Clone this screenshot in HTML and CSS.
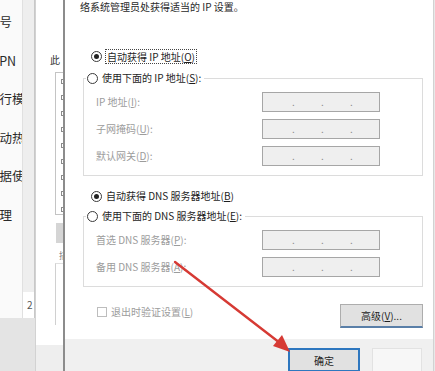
FILE: index.html
```html
<!DOCTYPE html>
<html lang="zh-CN">
<head>
<meta charset="utf-8">
<title>IPv4 属性</title>
<link rel="stylesheet" href="styles.css">
</head>
<body>
<div class="screen">
  <div class="win-a">
    <div class="win-a-top">
      <div class="nav">
        <div class="nav-item">拨号</div>
        <div class="nav-item vpn">VPN</div>
        <div class="nav-item">飞行模式</div>
        <div class="nav-item">移动热点</div>
        <div class="nav-item">数据使用量</div>
        <div class="nav-item">代理</div>
      </div>
      <div class="strip">
        <div class="page-num">2</div>
      </div>
    </div>
    <div class="win-a-bottom"></div>
  </div>

  <div class="win-b">
    <div class="b-title">此</div>
    <div class="b-list">
      <span class="b-chk"></span><span class="b-chk"></span><span class="b-chk"></span>
      <span class="b-chk"></span><span class="b-chk"></span><span class="b-chk"></span>
      <span class="b-chk"></span><span class="b-chk"></span><span class="b-chk"></span>
    </div>
    <div class="b-block"></div>
    <div class="b-label">描</div>
    <div class="b-box"></div>
    <div class="b-foot"></div>
  </div>

  <div class="dialog">
    <div class="dlg-body">
      <div class="intro">络系统管理员处获得适当的 IP 设置。</div>

      <div class="radio-row first">
        <span class="radio checked"></span>
        <span class="focus">自动获得 IP 地址(<u>O</u>)</span>
      </div>

      <div class="group ip-group">
        <div class="legend">
          <span class="radio"></span>
          <span>使用下面的 IP 地址(<u>S</u>):</span>
        </div>
        <div class="fields">
          <label class="f-label">IP 地址(<u>I</u>):</label>
          <div class="ip"><span>.</span><span>.</span><span>.</span></div>
          <label class="f-label">子网掩码(<u>U</u>):</label>
          <div class="ip"><span>.</span><span>.</span><span>.</span></div>
          <label class="f-label">默认网关(<u>D</u>):</label>
          <div class="ip"><span>.</span><span>.</span><span>.</span></div>
        </div>
      </div>

      <div class="radio-row dns">
        <span class="radio checked"></span>
        <span>自动获得 DNS 服务器地址(<u>B</u>)</span>
      </div>

      <div class="group dns-group">
        <div class="legend">
          <span class="radio"></span>
          <span>使用下面的 DNS 服务器地址(<u>E</u>):</span>
        </div>
        <div class="fields">
          <label class="f-label">首选 DNS 服务器(<u>P</u>):</label>
          <div class="ip"><span>.</span><span>.</span><span>.</span></div>
          <label class="f-label">备用 DNS 服务器(<u>A</u>):</label>
          <div class="ip"><span>.</span><span>.</span><span>.</span></div>
        </div>
      </div>

      <div class="bottom-row">
        <div class="check-row">
          <span class="checkbox"></span>
          <span>退出时验证设置(<u>L</u>)</span>
        </div>
        <button class="btn adv">高级(<u>V</u>)...</button>
      </div>
    </div>
    <div class="dlg-foot">
      <button class="btn ok">确定</button>
      <span class="btn ghost"></span>
    </div>
  </div>

  <svg class="arrow" width="435" height="371" viewBox="0 0 435 371">
    <line x1="175" y1="262" x2="280" y2="343" stroke="#d63a34" stroke-width="2.4" stroke-linecap="round"/>
    <polygon points="290,352 273,346 282,335" fill="#d63a34"/>
  </svg>
</div>
</body>
</html>
```

FILE: styles.css
```css
* { box-sizing: border-box; margin: 0; padding: 0; }
html, body { width: 435px; height: 371px; overflow: hidden; }
body {
  background: #e8e8e8;
  font-family: "Noto Sans CJK SC", "Microsoft YaHei", sans-serif;
  font-size: 10px;
  line-height: 14px;
  color: #1e1e1e;
}
.screen { display: flex; height: 371px; position: relative; }

/* left window */
.win-a { width: 35px; flex: none; display: flex; flex-direction: column; }
.win-a-top { height: 318px; display: flex; }
.nav { width: 22px; background: #fafafa; overflow: hidden; padding-top: 14px; }
.nav-item {
  white-space: nowrap;
  font-size: 12.5px;
  line-height: 16px;
  height: 38.6px;
  margin-left: -13px;
  color: #2a2a2a;
}
.nav-item.vpn { margin-left: -8px; }
.strip {
  width: 13px;
  background: #eeeeee;
  border-left: 1px solid #e0e0e0;
  border-right: 1px solid #c8c8c8;
  display: flex;
  flex-direction: column;
  justify-content: flex-end;
}
.page-num {
  height: 26px;
  background: #ffffff;
  color: #555;
  font-size: 10px;
  line-height: 26px;
  padding-left: 4px;
}
.win-a-bottom { flex: 1; background: #e4e4e4; }

/* middle window */
.win-b {
  width: 28px;
  flex: none;
  background: #ffffff;
  border-left: 1px solid #d2d2d2;
  display: flex;
  flex-direction: column;
  overflow: hidden;
}
.b-title { margin: 52px 0 0 14px; line-height: 16px; font-size: 10px; color: #333; }
.b-list {
  margin: 4px 0 0 19px;
  height: 143px;
  border: 1px solid #c4c4c4;
  border-right: none;
  display: flex;
  flex-direction: column;
  gap: 11px;
  padding: 6px 0 0 5px;
}
.b-chk { width: 5px; height: 5px; border: 1px solid #8a8a8a; flex: none; }
.b-block { margin: 8px 0 0 20px; height: 20px; background: #d5d5d5; }
.b-label { margin: 6px 0 0 23px; font-size: 9px; line-height: 14px; color: #888; }
.b-box { margin-left: 19px; height: 62px; border-left: 1px solid #d0d0d0; border-top: 1px solid #e0e0e0; }
.b-foot { margin-top: 20px; flex: 1; background: #eeeeee; }

/* dialog */
.dialog {
  flex: 1;
  margin-right: 1px;
  border-left: 2px solid #8c8c8c;
  border-right: 1px solid #d2d2d2;
  display: flex;
  flex-direction: column;
  background: #f0f0f0;
}
.dlg-body {
  height: 339px;
  flex: none;
  background: #ffffff;
  padding: 0 10px 0 18px;
  display: flex;
  flex-direction: column;
}
.intro {
  margin: -1px 0 0 -3px;
  height: 16px;
  line-height: 16px;
  white-space: nowrap;
  color: #2a2a2a;
}
.radio-row {
  display: flex;
  align-items: center;
  gap: 3px;
  height: 16px;
  white-space: nowrap;
  flex: none;
}
.radio-row.first { margin: 33px 0 0 8px; }
.radio-row.dns { margin: 12px 0 0 8px; gap: 4px; }
.radio {
  width: 11px;
  height: 11px;
  border: 1px solid #3a3a3a;
  border-radius: 50%;
  background: #fff;
  flex: none;
  display: flex;
  align-items: center;
  justify-content: center;
}
.radio.checked::after {
  content: "";
  width: 5px;
  height: 5px;
  border-radius: 50%;
  background: #222;
}
.focus { border: 1px dotted #444; padding: 0 1px; line-height: 13px; }

.group {
  border: 1px solid #dcdcdc;
  padding: 0 0 9px 0;
  display: flex;
  flex-direction: column;
  align-items: flex-start;
  flex: none;
}
.ip-group { margin-top: 14px; }
.dns-group { margin-top: 12px; }
.legend {
  display: flex;
  align-items: center;
  gap: 4px;
  height: 16px;
  margin: -9px 0 0 2px;
  padding: 0 3px 0 1px;
  background: #fff;
  white-space: nowrap;
}
.fields {
  display: grid;
  grid-template-columns: 166px 118px;
  row-gap: 7px;
  padding: 6px 0 0 12px;
  align-items: center;
}
.f-label { color: #9c9c9c; white-space: nowrap; line-height: 14px; }
.ip {
  height: 20px;
  border: 1px solid #a6a6a6;
  background: #efefef;
  display: flex;
  align-items: center;
  padding-left: 29px;
  gap: 26px;
  color: #8a8a8a;
  font-size: 10px;
}
.ip span { width: 3px; line-height: 10px; }

.bottom-row {
  margin-top: 17px;
  display: flex;
  justify-content: space-between;
  align-items: flex-start;
  flex: none;
}
.check-row {
  margin: 0 0 0 14px;
  display: flex;
  align-items: center;
  gap: 4px;
  height: 16px;
  color: #9c9c9c;
  white-space: nowrap;
}
.checkbox { width: 10px; height: 10px; border: 1px solid #bdbdbd; background: #fff; }
.btn {
  font-family: inherit;
  font-size: 10px;
  color: #1e1e1e;
  background: #e1e1e1;
  border: 1px solid #adadad;
  display: flex;
  align-items: center;
  justify-content: center;
}
.adv { width: 83px; height: 24px; border-bottom: 2px solid #5a7fa8; }
.dlg-foot { flex: 1; display: flex; align-items: flex-start; padding: 9px 0 0 223px; gap: 12px; }
.ok { width: 72px; height: 24px; border: 2px solid #2e77bf; }
.ghost { width: 50px; height: 24px; background: #f7f7f7; border-color: #e2e2e2; }

.arrow { position: absolute; left: 0; top: 0; pointer-events: none; }
```
